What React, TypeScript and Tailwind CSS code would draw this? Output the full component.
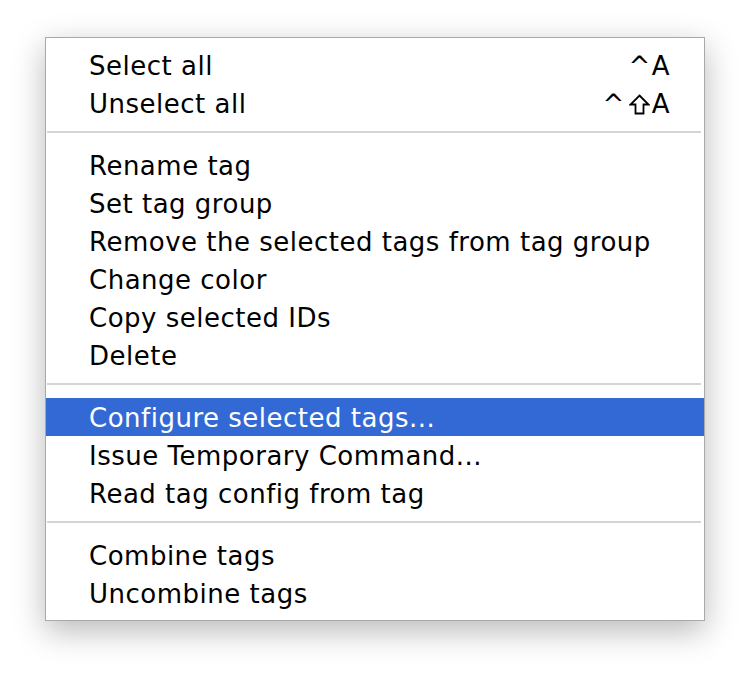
const groups: { label: string; shortcut?: 'a' | 'shift-a'; active?: boolean }[][] = [
  [
    { label: 'Select all', shortcut: 'a' },
    { label: 'Unselect all', shortcut: 'shift-a' },
  ],
  [
    { label: 'Rename tag' },
    { label: 'Set tag group' },
    { label: 'Remove the selected tags from tag group' },
    { label: 'Change color' },
    { label: 'Copy selected IDs' },
    { label: 'Delete' },
  ],
  [
    { label: 'Configure selected tags...', active: true },
    { label: 'Issue Temporary Command...' },
    { label: 'Read tag config from tag' },
  ],
  [{ label: 'Combine tags' }, { label: 'Uncombine tags' }],
];

function ShiftIcon() {
  return (
    <svg width="21" height="21" viewBox="0 0 21 21" className="mx-[2px]">
      <path
        d="M10.5 1.5 L19.5 10.5 L14.5 10.5 L14.5 19.5 L6.5 19.5 L6.5 10.5 L1.5 10.5 Z"
        fill="none"
        stroke="currentColor"
        strokeWidth="1.8"
        strokeLinejoin="miter"
      />
    </svg>
  );
}

function Shortcut({ kind }: { kind: 'a' | 'shift-a' }) {
  return (
    <span className="flex items-center">
      <span className={kind === 'a' ? 'mr-px' : 'mr-[2px]'}>^</span>
      {kind === 'shift-a' && <ShiftIcon />}
      <span>A</span>
    </span>
  );
}

export default function App() {
  return (
    <div className="min-h-screen bg-white pt-[37px] pl-[45px] font-['DejaVu_Sans',sans-serif]">
      <div className="w-[660px] border border-[#a9a9a9] bg-white py-2 shadow-[0_10px_30px_rgba(0,0,0,0.28)]">
        {groups.map((group, gi) => (
          <div key={gi}>
            {gi > 0 && (
              <div className="h-6 pt-[9px]">
                <div className="ml-px mr-[3px] h-[2px] bg-[#d5d5d5]" />
              </div>
            )}
            {group.map((item) => (
              <div
                key={item.label}
                className={`flex h-[38px] items-center justify-between pt-[3px] pl-[43px] pr-[34px] text-[26px] tracking-[0.5px] ${
                  item.active ? 'bg-[#3369d5] text-white' : 'text-black'
                }`}
              >
                <span>{item.label}</span>
                {item.shortcut && <Shortcut kind={item.shortcut} />}
              </div>
            ))}
          </div>
        ))}
      </div>
    </div>
  );
}
